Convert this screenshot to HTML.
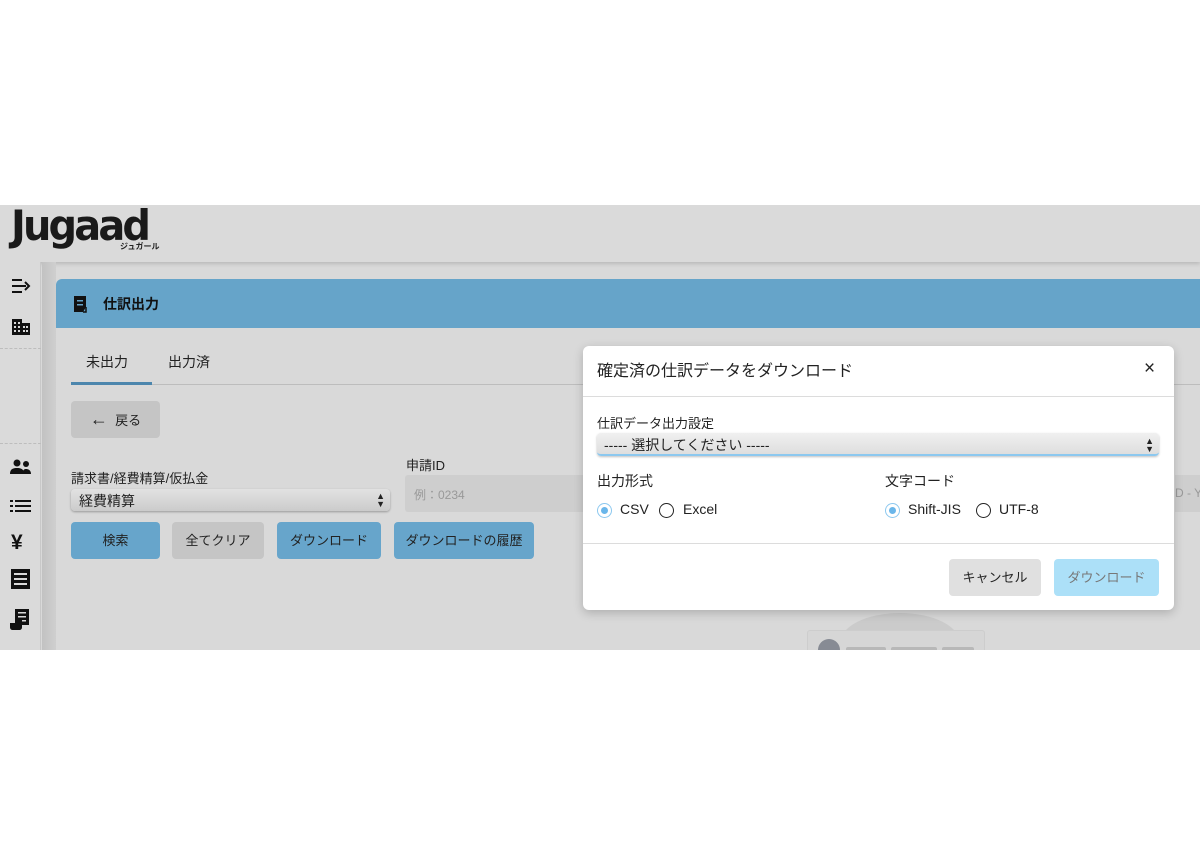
<!DOCTYPE html>
<html><head><meta charset="utf-8"><style>
*{box-sizing:border-box;margin:0;padding:0}
body{width:1200px;height:854px;background:#fff;position:relative;overflow:hidden;font-family:"Liberation Sans","Noto Sans CJK JP",sans-serif;color:#222}
.abs{position:absolute}
#app{left:0;top:205px;width:1200px;height:445px;background:#d9d9d9;overflow:hidden}
.hdr{left:0;top:0;width:1200px;height:57px;background:#dadada;box-shadow:0 2px 4px rgba(0,0,0,.15)}
.side{left:0;top:57px;width:41px;height:388px;background:#dadada;border-right:1px solid #c8c8c8}
.strip{left:42px;top:57px;width:14px;height:388px;background:linear-gradient(90deg,#c2c2c2,#cfcfcf)}
.card{left:56px;top:74px;width:1160px;height:400px;background:#d9d9d9;border-radius:6px 0 0 0}
.bluehead{left:56px;top:74px;width:1150px;height:49px;background:#66a4c9;border-radius:6px 0 0 0}
.btn{position:absolute;border-radius:4px;font-size:13px;text-align:center;line-height:37px;color:#222}
.blue{background:#67a5cb}
.grey{background:#c5c5c5}
.dash{position:absolute;left:0;width:41px;border-top:1px dashed #bdbdbd}
.modal{left:583px;top:346px;width:591px;height:264px;background:#fff;border-radius:6px;box-shadow:0 3px 10px rgba(0,0,0,.2)}
.radio{position:absolute;width:15px;height:15px;border-radius:50%;border:1.5px solid #222;background:#fff}
.radio.on{border:1.5px solid #8cc8ef}
.radio.on::after{content:"";position:absolute;left:2.5px;top:2.5px;width:7px;height:7px;border-radius:50%;background:#6ab6ea}
.t{position:absolute;white-space:nowrap}
</style></head><body>
<div id="app" class="abs">
 <div class="hdr abs">
  <div class="t" style="left:11px;top:-4px;font:bold 42px 'DejaVu Sans',sans-serif;color:#1a1a1a;letter-spacing:-3px;transform:scaleX(0.95);transform-origin:left">Jugaad</div>
  <div class="t" style="left:120px;top:36px;font-size:8px;font-weight:bold">ジュガール</div>
 </div>
 <div class="side abs">
  <svg class="abs" style="left:11px;top:16px" width="20" height="16" viewBox="0 0 20 16"><path d="M1 2h10M1 8h14M1 14h10" stroke="#111" stroke-width="2"/><path d="M14 4l4 4-4 4" fill="none" stroke="#111" stroke-width="2"/></svg>
  <svg class="abs" style="left:11px;top:56px" width="20" height="17" viewBox="0 0 20 17"><path d="M1 1h10v4h8v12H1z" fill="#111"/><g fill="#dadada"><rect x="3" y="4" width="2" height="2"/><rect x="7" y="4" width="2" height="2"/><rect x="3" y="8" width="2" height="2"/><rect x="7" y="8" width="2" height="2"/><rect x="3" y="12" width="2" height="2"/><rect x="7" y="12" width="2" height="2"/><rect x="12" y="8" width="2" height="2"/><rect x="15" y="8" width="2" height="2"/><rect x="12" y="12" width="2" height="2"/><rect x="15" y="12" width="2" height="2"/></g></svg>
  <div class="dash" style="top:86px"></div>
  <div class="dash" style="top:181px"></div>
  <svg class="abs" style="left:10px;top:197px" width="22" height="16" viewBox="0 0 22 16"><circle cx="7" cy="4" r="3.5" fill="#111"/><circle cx="16" cy="5" r="3" fill="#111"/><path d="M0 15c0-5 3-6 7-6s7 1 7 6zM12 15c1-4 2-5 4-5s5 1 5 5z" fill="#111"/></svg>
  <svg class="abs" style="left:10px;top:237px" width="22" height="14" viewBox="0 0 22 14"><g fill="#111"><rect x="0" y="1" width="3" height="2"/><rect x="0" y="6" width="3" height="2"/><rect x="0" y="11" width="3" height="2"/><rect x="5" y="1" width="16" height="2"/><rect x="5" y="6" width="16" height="2"/><rect x="5" y="11" width="16" height="2"/></g></svg>
  <div class="t" style="left:11px;top:269px;font-size:21px;font-weight:bold;color:#111">¥</div>
  <svg class="abs" style="left:11px;top:307px" width="19" height="20" viewBox="0 0 19 20"><rect x="0" y="0" width="19" height="20" fill="#111"/><g fill="#dadada"><rect x="3" y="4" width="13" height="2"/><rect x="3" y="9" width="13" height="2"/><rect x="3" y="14" width="13" height="2"/></g></svg>
  <svg class="abs" style="left:10px;top:346px" width="20" height="22" viewBox="0 0 20 22"><path d="M5 1h14v16H5z" fill="#111"/><path d="M0 15h12v4c0 2-1 3-3 3H3c-2 0-3-1-3-3z" fill="#111"/><g fill="#dadada"><rect x="8" y="4" width="8" height="1.5"/><rect x="8" y="8" width="8" height="1.5"/><rect x="12" y="12" width="4" height="1.5"/></g></svg>
 </div>
 <div class="strip abs"></div>
 <div class="card abs"></div>
 <div class="bluehead abs">
  <svg class="abs" style="left:17px;top:16px" width="16" height="18" viewBox="0 0 16 18"><path d="M1 1h12v11l-3 5H1z" fill="#111"/><g fill="#66a4c9"><rect x="4" y="5" width="6" height="1.5"/><rect x="4" y="9" width="6" height="1.5"/></g><path d="M13 12v5h-3" fill="none" stroke="#111" stroke-width="1.5"/></svg>
  <div class="t" style="left:47px;top:15px;font-size:14px;font-weight:bold;color:#111">仕訳出力</div>
 </div>
 <div class="t" style="left:86px;top:147px;font-size:14px">未出力</div>
 <div class="t" style="left:168px;top:147px;font-size:14px">出力済</div>
 <div class="abs" style="left:71px;top:179px;width:1130px;height:1px;background:#bdbdbd"></div>
 <div class="abs" style="left:71px;top:177px;width:81px;height:3px;background:#4c86ad"></div>
 <div class="btn grey" style="left:71px;top:196px;width:89px;height:37px"><span style="font-size:18px">←</span>&nbsp; 戻る</div>
 <div class="t" style="left:71px;top:263px;font-size:13px">請求書/経費精算/仮払金</div>
 <div class="abs" style="left:71px;top:284px;width:319px;height:22px;border-radius:4px;background:linear-gradient(#e2e2e2,#cbcbcb);box-shadow:0 1px 2px rgba(0,0,0,.3)"><span class="t" style="left:8px;top:2px;font-size:14px">経費精算</span><span class="t" style="right:5px;top:3px;font-size:9px;line-height:8px">▲<br>▼</span></div>
 <div class="t" style="left:406px;top:250px;font-size:13px">申請ID</div>
 <div class="abs" style="left:405px;top:270px;width:200px;height:37px;background:#cecece;border-radius:3px"><span class="t" style="left:9px;top:11px;font-size:12px;color:#999">例：0234</span></div>
 <div class="abs" style="left:1175px;top:270px;width:30px;height:37px;background:#cecece"><span class="t" style="left:0;top:11px;font-size:12px;color:#999">D - Y</span></div>
 <div class="btn blue" style="left:71px;top:317px;width:89px;height:37px">検索</div>
 <div class="btn grey" style="left:172px;top:317px;width:92px;height:37px">全てクリア</div>
 <div class="btn blue" style="left:277px;top:317px;width:104px;height:37px">ダウンロード</div>
 <div class="btn blue" style="left:394px;top:317px;width:140px;height:37px">ダウンロードの履歴</div>
 <div class="abs" style="left:840px;top:408px;width:120px;height:60px;border-radius:50%;background:#cbcbcb"></div>
 <div class="abs" style="left:807px;top:425px;width:178px;height:40px;background:#d6d6d6;border:1px solid #cdcdcd;border-radius:3px"></div>
 <div class="abs" style="left:818px;top:434px;width:22px;height:22px;border-radius:50%;background:#878b94"></div>
 <div class="abs" style="left:846px;top:442px;width:40px;height:10px;background:#b8b8b8;border-radius:2px"></div>
 <div class="abs" style="left:891px;top:442px;width:46px;height:10px;background:#b8b8b8;border-radius:2px"></div>
 <div class="abs" style="left:942px;top:442px;width:32px;height:10px;background:#b8b8b8;border-radius:2px"></div>
</div>
<div class="modal abs">
 <div class="t" style="left:14px;top:11px;font-size:16px">確定済の仕訳データをダウンロード</div>
 <div class="t" style="left:561px;top:12px;font-size:19px">×</div>
 <div class="abs" style="left:0;top:50px;width:591px;height:1px;background:#dcdcdc"></div>
 <div class="t" style="left:14px;top:67px;font-size:13px">仕訳データ出力設定</div>
 <div class="abs" style="left:14px;top:87px;width:562px;height:23px;border-radius:4px;background:linear-gradient(#f0f0f0,#dedede);border-bottom:2px solid #8cc8ef;box-shadow:0 1px 2px rgba(0,0,0,.25)"><span class="t" style="left:7px;top:2px;font-size:14px">----- 選択してください -----</span><span class="t" style="right:5px;top:4px;font-size:9px;line-height:8px">▲<br>▼</span></div>
 <div class="t" style="left:14px;top:125px;font-size:14px">出力形式</div>
 <div class="t" style="left:302px;top:125px;font-size:14px">文字コード</div>
 <div class="radio on" style="left:14px;top:157px"></div><div class="t" style="left:37px;top:155px;font-size:14px">CSV</div>
 <div class="radio" style="left:76px;top:157px"></div><div class="t" style="left:100px;top:155px;font-size:14px">Excel</div>
 <div class="radio on" style="left:302px;top:157px"></div><div class="t" style="left:325px;top:155px;font-size:14px">Shift-JIS</div>
 <div class="radio" style="left:393px;top:157px"></div><div class="t" style="left:416px;top:155px;font-size:14px">UTF-8</div>
 <div class="abs" style="left:0;top:197px;width:591px;height:1px;background:#dcdcdc"></div>
 <div class="btn" style="left:366px;top:213px;width:92px;height:37px;background:#e0e0e0">キャンセル</div>
 <div class="btn" style="left:471px;top:213px;width:105px;height:37px;background:#ace0f8;color:#777">ダウンロード</div>
</div>
</body></html>
